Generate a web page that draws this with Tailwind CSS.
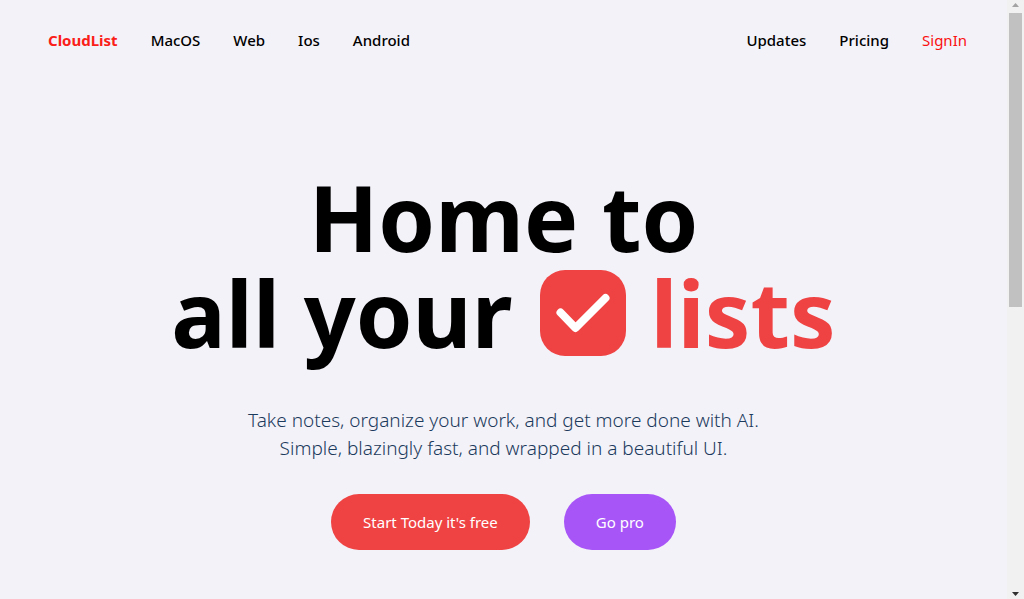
<!DOCTYPE html>
<html lang="en">
<head>
<meta charset="utf-8">
<meta name="viewport" content="width=device-width, initial-scale=1">
<title>CloudList</title>
<script src="https://cdn.jsdelivr.net/npm/@tailwindcss/browser@4"></script>
</head>
<body class="flex h-screen overflow-hidden bg-[#f3f2f9] font-['Segoe_UI','Noto_Sans',sans-serif] text-black">
  <div class="min-w-0 flex-1">
    <header class="flex items-center justify-between pt-7 pr-10 pl-12 text-[15px] leading-6 font-medium">
      <nav aria-label="Products" class="flex gap-[33px]">
        <a href="#" class="font-bold text-[#fa2018]">CloudList</a>
        <a href="#">MacOS</a>
        <a href="#">Web</a>
        <a href="#">Ios</a>
        <a href="#">Android</a>
      </nav>
      <nav aria-label="Account" class="flex gap-[33px]">
        <a href="#">Updates</a>
        <a href="#">Pricing</a>
        <a href="#" class="font-normal text-[#fa1010]">SignIn</a>
      </nav>
    </header>
    <main class="flex flex-col items-center pt-[117px] text-center">
      <h1 class="text-[91px] leading-24 font-bold">
        <span class="block">Home to</span>
        <span class="flex items-center justify-center gap-6">
          <span>all your</span>
          <svg viewBox="0 0 86 86" class="ml-1 size-[86px]" role="img" aria-label="Check mark">
            <rect width="86" height="86" rx="25" fill="#ef4343"/>
            <path d="M20.500 42.500 35.500 58 65.500 28" fill="none" stroke="#fff" stroke-width="8" stroke-linecap="round" stroke-linejoin="round"/>
          </svg>
          <span class="text-[#ef4343]">lists</span>
        </span>
      </h1>
      <p class="mt-[45px] text-[19px] leading-7 font-light text-[#1c3a5c]">Take notes, organize your work, and get more done with AI.<br>Simple, blazingly fast, and wrapped in a beautiful UI.</p>
      <div class="mt-8 flex gap-[34px] text-[15px] leading-6 text-white">
        <button type="button" class="rounded-full bg-[#ef4343] px-8 py-4">Start Today it's free</button>
        <button type="button" class="rounded-full bg-[#a855f7] px-8 py-4">Go pro</button>
      </div>
    </main>
  </div>
  <div class="flex w-[17px] flex-col items-center bg-[#f1f1f1]" aria-hidden="true">
    <svg viewBox="0 0 17 13" class="h-[13px] w-[17px] shrink-0"><path d="M5 7 8.500 3 12 7Z" fill="#a3a3a3"/></svg>
    <div class="h-[49%] w-[13px] bg-[#c1c1c1]"></div>
    <svg viewBox="0 0 17 13" class="mt-auto h-[13px] w-[17px] shrink-0"><path d="M5 6 8.500 10 12 6Z" fill="#303030"/></svg>
  </div>
</body>
</html>
